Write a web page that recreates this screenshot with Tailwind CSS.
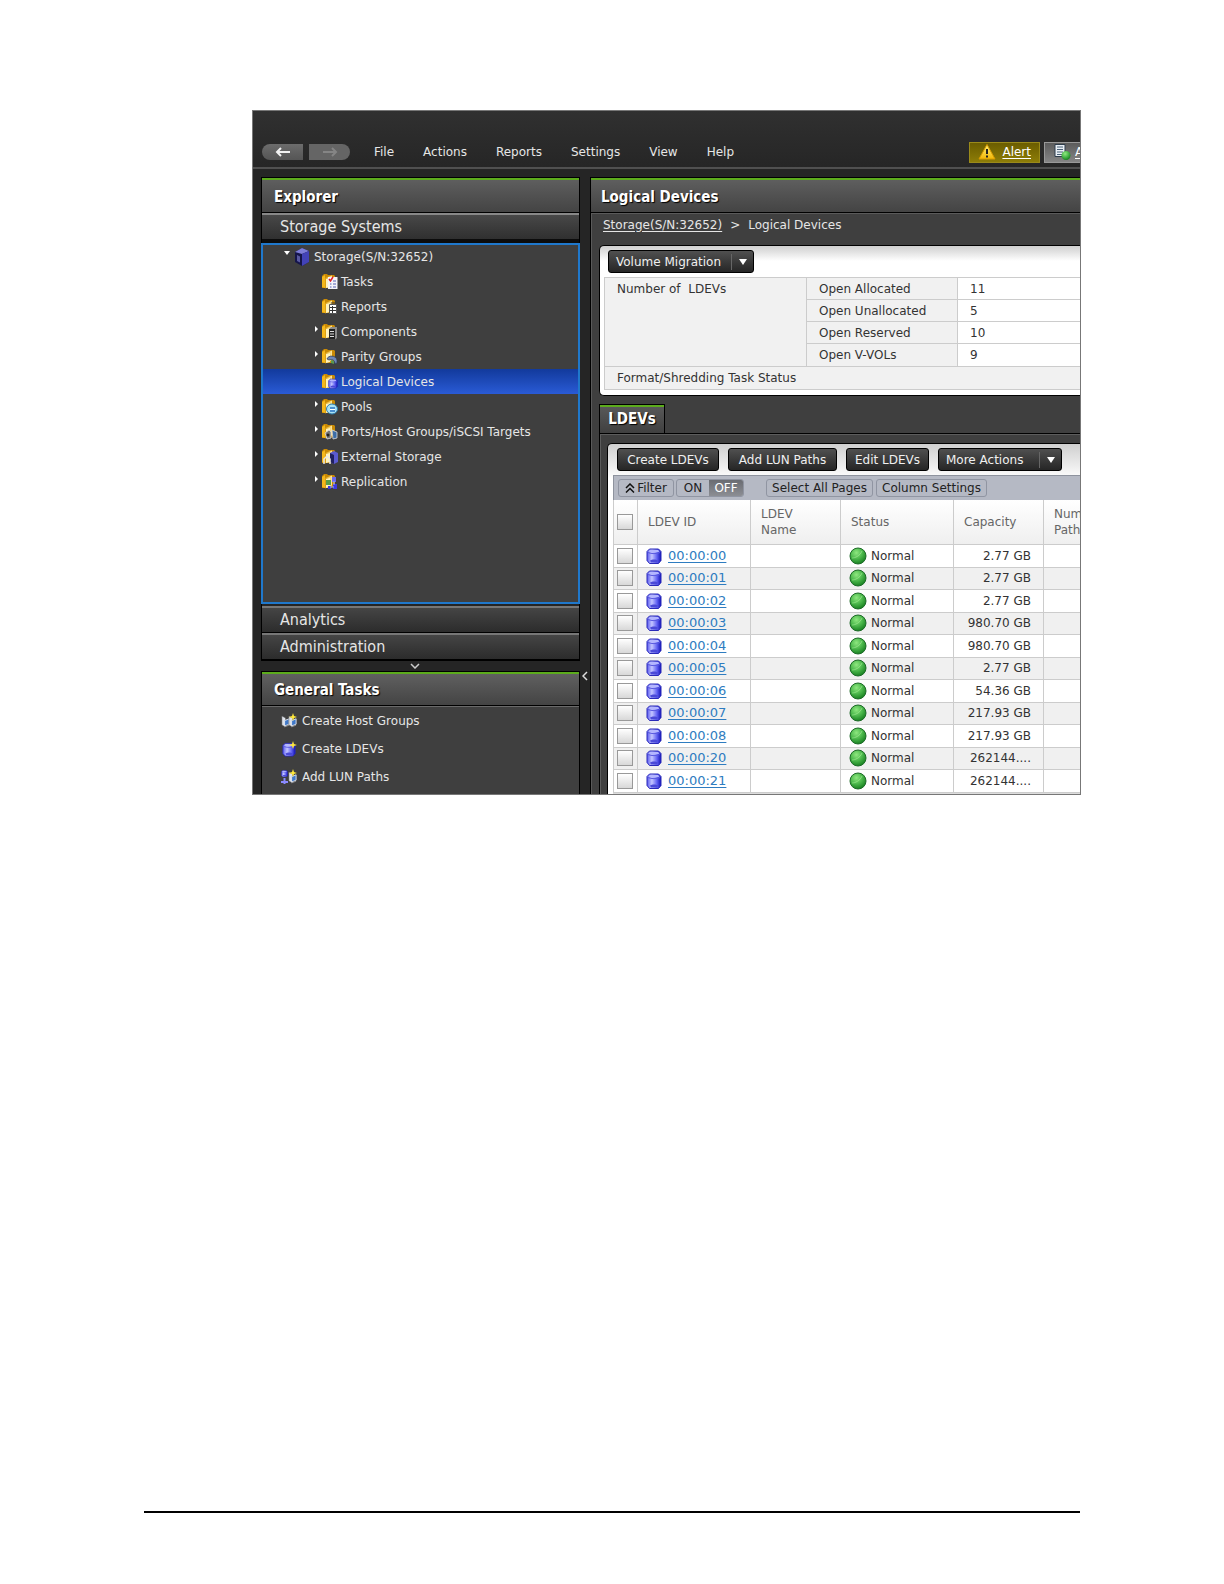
<!DOCTYPE html>
<html lang="en">
<head>
  <meta charset="UTF-8" />
  <meta name="viewport" content="width=device-width, initial-scale=1.0" />
  <title>Logical Devices</title>
  <script src="https://cdn.jsdelivr.net/npm/@tailwindcss/browser@4"></script>
</head>
<body class="bg-white font-['DejaVu_Sans',sans-serif] text-xs">

  <!-- shared icons -->
  <svg class="absolute size-0" aria-hidden="true">
    <defs>
      <linearGradient id="gFolder" x1="0" x2="1"><stop offset="0" stop-color="#d99a08" /><stop offset="1" stop-color="#ffe9a0" /></linearGradient>
      <linearGradient id="gBlue" x1="0" x2="1"><stop offset="0" stop-color="#5a5af0" /><stop offset=".35" stop-color="#c4c6ff" /><stop offset=".7" stop-color="#6464f4" /><stop offset="1" stop-color="#1212b8" /></linearGradient>
      <radialGradient id="gGreen" cx=".4" cy=".3" r=".75"><stop offset="0" stop-color="#8fe880" /><stop offset=".5" stop-color="#4cb84c" /><stop offset="1" stop-color="#127a1c" /></radialGradient>
      <linearGradient id="gWarn" x1="0" x2="0" y1="0" y2="1"><stop offset="0" stop-color="#fff27a" /><stop offset="1" stop-color="#f2b705" /></linearGradient>
    </defs>
    <symbol id="folder" viewBox="0 0 17 17">
      <path d="M1 3l2-2h3l1 1h6l1 1v9l-4 3H1z" fill="#c98a05" />
      <path d="M1 4l3-2v13l-3-1z" fill="#f5b81c" />
      <path d="M4 5l7-2.500v10L4 15.500z" fill="url(#gFolder)" />
      <path d="M5 6l4-1v9l-4 1z" fill="#fff3bd" />
    </symbol>
    <symbol id="disk" viewBox="0 0 16 16">
      <path d="M1 3.500L3.500 1h9L15 3.500v9L12.500 15.500h-9L1 12.500z" fill="url(#gBlue)" stroke="#2a2ab8" />
      <path d="M4 2h8l1.500 1.500c-3 1.500-8 1.500-11 0z" fill="#b4b6ff" />
      <path d="M2 4.500c3 1.500 9 1.500 12 0" fill="none" stroke="#5a5ae0" />
      <path d="M4 12.500c2-1.500 6-1.500 8 0l-1 2H5z" fill="#4a4ad8" />
    </symbol>
    <symbol id="ball" viewBox="0 0 18 18">
      <circle cx="9" cy="9" r="8" fill="url(#gGreen)" stroke="#1d6b28" />
      <path d="M3 11C6 11 11 9 13 4" fill="none" stroke="#b4f5a4" stroke-opacity=".5" />
    </symbol>
    <symbol id="star" viewBox="0 0 8 8">
      <path d="M4 0l1 3 3 1-3 1-1 3-1-3-3-1 3-1z" fill="#ffe83a" />
    </symbol>
    <symbol id="host" viewBox="0 0 10 14">
      <path d="M1 1l4 2v10l-4-2z" fill="#dfe3ea" stroke="#555" stroke-width=".5" />
      <path d="M4 6l5-2v6l-5 2z" fill="#3f78c8" stroke="#e4e8f0" />
      <path d="M4 13l5-2" stroke="#999" />
    </symbol>
  </svg>

  <div class="flex min-h-screen flex-col px-36 pt-[110px] pb-[71px]">
    <div class="-mr-px ml-[108px] overflow-hidden border border-[#777] bg-[#252525] text-[#e6e6e6]">

      <header class="flex h-14 items-center overflow-hidden bg-linear-to-b from-[#303030] to-[#262626] pt-[26px] pl-[9px] whitespace-nowrap">
        <button class="flex h-4 w-[41px] items-center justify-center rounded-l-full bg-linear-to-b from-[#6c6c6c] to-[#555]" aria-label="Back">
          <svg class="h-3 w-4" viewBox="0 0 16 12" fill="none" stroke="#f2f2f2" stroke-width="2"><path d="M15 6H2M6 2L2 6l4 4" /></svg>
        </button>
        <button class="ml-1.5 flex h-4 w-[41px] items-center justify-center rounded-r-full bg-[#656565]" aria-label="Forward">
          <svg class="h-3 w-4" viewBox="0 0 16 12" fill="none" stroke="#858585" stroke-width="2"><path d="M1 6h13M10 2l4 4-4 4" /></svg>
        </button>
        <nav class="ml-6 flex gap-[29px]">
          <a href="#">File</a>
          <a href="#">Actions</a>
          <a href="#">Reports</a>
          <a href="#">Settings</a>
          <a href="#">View</a>
          <a href="#">Help</a>
        </nav>
        <div class="ml-auto flex gap-1">
          <button class="flex h-[21px] w-[71px] items-center justify-between border border-[#9a8a1a] bg-linear-to-b from-[#6b5d00] to-[#8d7d08] pr-2 pl-2 text-white">
            <svg class="size-[18px]" viewBox="0 0 18 18"><path d="M9 1.500L17 16H1z" fill="url(#gWarn)" stroke="#d89a00" stroke-linejoin="round" /><path d="M9 6v5M9 12.500v2" stroke="#222" stroke-width="2" /></svg>
            <span class="underline underline-offset-2">Alert</span>
          </button>
          <button class="flex h-[21px] w-9 items-center gap-1 overflow-hidden border border-r-0 border-[#999] bg-linear-to-b from-[#5c5c5c] to-[#858585] pl-2 text-white" aria-label="Alert list">
            <svg class="size-[18px] shrink-0" viewBox="0 0 18 18"><path d="M2 1.500h10v12H2z" fill="#e8eef4" stroke="#2e3d4c" /><path d="M4 4h6M4 6.500h6M4 9h6M4 11.500h6" stroke="#4b6278" /><circle cx="13" cy="12.500" r="4.500" fill="url(#gGreen)" /></svg>
            <span class="underline underline-offset-2">A</span>
          </button>
        </div>
      </header>

      <div class="flex border-t-2 border-[#505050] pt-2 pl-2">

        <!-- left side -->
        <aside class="flex w-[319px] shrink-0 flex-col">
          <section class="border border-black">
            <h2 class="flex h-[35px] items-center border-t-2 border-b border-t-[#5cab1c] border-b-black bg-linear-to-b from-[#5e5e5e] to-[#444] pt-[3px] pl-3 font-['DejaVu_Sans_Condensed','DejaVu_Sans',sans-serif] text-[15px] font-bold text-white [text-shadow:1px_1px_1px_#000]">Explorer</h2>
            <button class="flex h-[30px] w-full items-center border-t-2 border-b-4 border-t-[#888] border-b-[#0c0c0c] bg-linear-to-b from-[#484848] to-[#303030] pl-[18px] font-['DejaVu_Sans_Condensed','DejaVu_Sans',sans-serif] text-base">Storage Systems</button>

            <div class="-mx-px h-[361px] border-2 border-[#1f78cc] bg-[#3f3f3f]">
              <a href="#" class="flex h-6 items-center pl-[21px]">
                <svg class="mb-2 h-1 w-1.5" viewBox="0 0 6 4"><path d="M0 0h6L3 4z" fill="#fff" /></svg>
                <svg class="mx-1 h-[18px] w-4" viewBox="0 0 16 18"><path d="M1 4l7-4 7 3v11l-7 4-7-4z" fill="#15154a" /><path d="M1 4l7-4 7 3-7 3z" fill="#7d7dd8" /><path d="M8 6l7-3v11l-7 4z" fill="#4343b8" /><path d="M3 7l3 1.500v6L3 13z" fill="#5858a0" /></svg>
                <span>Storage(S/N:32652)</span>
              </a>
              <ul>
                <li><a href="#" class="flex h-[25px] items-center pl-[58px]">
                  <svg class="mr-[3px] size-[17px]" viewBox="0 0 17 17"><use href="#folder" /><path d="M7 4h9.500v12H7z" fill="#f4f4fa" /><path d="M8 6l1.500 2L12 4" stroke="#e0202a" stroke-width="1.500" fill="none" /><path d="M12 8h3M9 11h1.500M12 11h3M9 14h1.500M12 14h3" stroke="#5560b0" /></svg>
                  Tasks</a></li>
                <li><a href="#" class="flex h-[25px] items-center pl-[58px]">
                  <svg class="mr-[3px] size-[17px]" viewBox="0 0 17 17"><use href="#folder" /><path d="M8.500 6.500h7v9h-7z" fill="#fff" stroke="#555" /><path d="M10 5h4M9 9.500h6M9 12.500h6M11.500 8v7" stroke="#333" /></svg>
                  Reports</a></li>
                <li><a href="#" class="flex h-[25px] items-center pl-[52px]">
                  <svg class="mr-[3px] mb-1.5 h-1.5 w-[3px]" viewBox="0 0 3 6"><path d="M0 0v6l3-3z" fill="#fff" /></svg>
                  <svg class="mr-[3px] size-[17px]" viewBox="0 0 17 17"><use href="#folder" /><path d="M8 6l2-2h6v11l-2 1.500H8z" fill="#8b8b8b" /><path d="M8 6h6v10.500H8z" fill="#222" /><path d="M9 8.500h4M9 11h4M9 13.500h4" stroke="#ddd" /></svg>
                  Components</a></li>
                <li><a href="#" class="flex h-[25px] items-center pl-[52px]">
                  <svg class="mr-[3px] mb-1.5 h-1.5 w-[3px]" viewBox="0 0 3 6"><path d="M0 0v6l3-3z" fill="#fff" /></svg>
                  <svg class="mr-[3px] size-[17px]" viewBox="0 0 17 17"><use href="#folder" /><path d="M6 11c1-4 9-4 10 1v3l-2 1c0-4-3-5-6-4z" fill="#6f88b8" stroke="#29364e" stroke-width=".7" /><path d="M10 12l3 1v3l-3-1z" fill="#5a9850" /></svg>
                  Parity Groups</a></li>
                <li><a href="#" class="flex h-[25px] items-center bg-linear-to-b from-[#123a9c] to-[#2a5bd6] pl-[58px]">
                  <svg class="mr-[3px] size-[17px]" viewBox="0 0 17 17"><use href="#folder" /><use href="#disk" x="7" y="5" width="10" height="11" /></svg>
                  Logical Devices</a></li>
                <li><a href="#" class="flex h-[25px] items-center pl-[52px]">
                  <svg class="mr-[3px] mb-1.5 h-1.5 w-[3px]" viewBox="0 0 3 6"><path d="M0 0v6l3-3z" fill="#fff" /></svg>
                  <svg class="mr-[3px] size-[17px]" viewBox="0 0 17 17"><use href="#folder" /><ellipse cx="11" cy="11" rx="5.500" ry="5" fill="#a9e2f5" stroke="#2c7cae" /><path d="M9 9h5v5H9z" fill="#4a8fd0" /><path d="M9 11.500h5" stroke="#fff" /></svg>
                  Pools</a></li>
                <li><a href="#" class="flex h-[25px] items-center pl-[52px]">
                  <svg class="mr-[3px] mb-1.5 h-1.5 w-[3px]" viewBox="0 0 3 6"><path d="M0 0v6l3-3z" fill="#fff" /></svg>
                  <svg class="mr-[3px] size-[17px]" viewBox="0 0 17 17"><use href="#folder" /><path d="M4 10l4-3 2 2v6l-4 1z" fill="#777" stroke="#ddd" stroke-width=".8" /><path d="M11 7l5 2v6l-4 1z" fill="#3c6ea8" stroke="#ddd" stroke-width=".8" /><circle cx="7" cy="12" r="1.500" fill="#222" /></svg>
                  Ports/Host Groups/iSCSI Targets</a></li>
                <li><a href="#" class="flex h-[25px] items-center pl-[52px]">
                  <svg class="mr-[3px] mb-1.5 h-1.5 w-[3px]" viewBox="0 0 3 6"><path d="M0 0v6l3-3z" fill="#fff" /></svg>
                  <svg class="mr-[3px] size-[17px]" viewBox="0 0 17 17"><use href="#folder" /><path d="M9 5l4-2 4 2v9l-4 2-4-2z" fill="#5a5ad0" /><path d="M9 5l4 2v9l-4-2z" fill="#202060" /><path d="M3 16v-5l3-3 3 3v5" fill="none" stroke="#e8e8e8" stroke-width="1.500" /></svg>
                  External Storage</a></li>
                <li><a href="#" class="flex h-[25px] items-center pl-[52px]">
                  <svg class="mr-[3px] mb-1.5 h-1.5 w-[3px]" viewBox="0 0 3 6"><path d="M0 0v6l3-3z" fill="#fff" /></svg>
                  <svg class="mr-[3px] size-[17px]" viewBox="0 0 17 17"><use href="#folder" /><path d="M5 7h5v5H5z" fill="#5aa04a" /><path d="M11 4h4v5h-4z" fill="#6a6af0" /><path d="M12 11h4v5h-4zM7 13h3v3H7z" fill="#3a3ae0" /><path d="M9 14h4M13 8v4" stroke="#9ab4ff" /></svg>
                  Replication</a></li>
              </ul>
            </div>

            <button class="mt-0.5 flex h-[27px] w-full items-center border-t-2 border-b border-t-[#777] border-b-black bg-linear-to-b from-[#454545] to-[#2c2c2c] pl-[18px] font-['DejaVu_Sans_Condensed','DejaVu_Sans',sans-serif] text-base leading-5">Analytics</button>
            <button class="flex h-[27px] w-full items-center border-t-2 border-b border-t-[#777] border-b-black bg-linear-to-b from-[#454545] to-[#2c2c2c] pl-[18px] font-['DejaVu_Sans_Condensed','DejaVu_Sans',sans-serif] text-base leading-5">Administration</button>
          </section>

          <button class="flex h-2.5 items-center justify-center pr-3" aria-label="Collapse navigation">
            <svg class="h-1.5 w-2.5" viewBox="0 0 10 6" fill="none" stroke="#ccc" stroke-width="1.500"><path d="M1 1l4 4 4-4" /></svg>
          </button>

          <section class="grow border border-b-0 border-black bg-[#3f3f3f]">
            <h2 class="flex h-[34px] items-center border-t-2 border-b border-t-[#5cab1c] border-b-black bg-linear-to-b from-[#606060] to-[#444] pt-[3px] pl-3 font-['DejaVu_Sans_Condensed','DejaVu_Sans',sans-serif] text-[15px] font-bold text-white [text-shadow:1px_1px_1px_#000]">General Tasks</h2>
            <ul class="border-t border-[#6a6a6a]">
              <li><a href="#" class="flex h-7 items-center gap-[5px] pl-[19px]">
                <svg class="size-4" viewBox="0 0 16 16"><use href="#host" x="0" y="2" width="9" height="13" /><use href="#host" x="7" y="2" width="9" height="13" /><use href="#star" x="8" y="0" width="8" height="8" /></svg>
                Create Host Groups</a></li>
              <li><a href="#" class="flex h-7 items-center gap-[5px] pl-[19px]">
                <svg class="size-4" viewBox="0 0 16 16"><use href="#disk" x="1" y="1" width="14" height="15" /><use href="#star" x="8" y="0" width="8" height="8" /></svg>
                Create LDEVs</a></li>
              <li><a href="#" class="flex h-7 items-center gap-[5px] pl-[19px]">
                <svg class="size-4" viewBox="0 0 16 16"><use href="#disk" x="0" y="0" width="7" height="9" /><path d="M3.500 9v6M0 13h7" stroke="#8a8aff" stroke-width="2" /><use href="#host" x="7" y="2" width="9" height="13" /><use href="#star" x="8" y="0" width="8" height="8" /></svg>
                Add LUN Paths</a></li>
            </ul>
          </section>
        </aside>

        <div class="flex w-2.5 shrink-0 items-start justify-center pt-[494px]">
          <button aria-label="Hide side panel">
            <svg class="h-2.5 w-1.5" viewBox="0 0 6 10" fill="none" stroke="#ddd" stroke-width="1.500"><path d="M5 1L1 5l4 4" /></svg>
          </button>
        </div>

        <!-- right side, runs past the window edge -->
        <main class="min-w-0 grow overflow-hidden border-t border-l border-black bg-[#3f3f3f] whitespace-nowrap">
          <h1 class="flex h-[35px] items-center border-t-2 border-b border-t-[#5cab1c] border-b-black bg-linear-to-b from-[#5e5e5e] to-[#444] pt-[3px] pl-2.5 font-['DejaVu_Sans_Condensed','DejaVu_Sans',sans-serif] text-[15px] font-bold text-white [text-shadow:1px_1px_1px_#000]">Logical Devices</h1>

          <div class="border-t border-l border-[#5a5a5a] pl-[7px]">
            <p class="flex h-[21px] items-center gap-2 pl-1">
              <a href="#" class="underline underline-offset-2">Storage(S/N:32652)</a>
              <span>&gt;</span>
              <span>Logical Devices</span>
            </p>

            <section class="mt-2.5 rounded-l-[5px] border border-r-0 border-black bg-white bg-linear-to-b from-[#cfcfcf] to-white to-10% pt-1 pb-[5px] pl-1 text-[#333]">
              <button class="ml-1 flex h-[23px] w-[146px] items-center justify-between rounded-[3px] border border-black bg-linear-to-b from-[#505050] to-[#262626] pl-[7px] text-[#f0f0f0]">
                Volume Migration
                <span class="flex h-4 w-[22px] items-center justify-center border-l border-[#666]">
                  <svg class="h-1.5 w-2" viewBox="0 0 8 6"><path d="M0 0h8L4 6z" fill="#fff" /></svg>
                </span>
              </button>
              <table class="mt-1 w-full table-fixed border-collapse border border-r-0 border-[#ccc] bg-[#f1f1f1] text-left">
                <colgroup><col class="w-[202px]" /><col class="w-[151px]" /><col /></colgroup>
                <tbody>
                  <tr class="h-[22px]">
                    <th rowspan="4" class="border-r border-[#ccc] pt-[3px] pl-3 align-top font-normal whitespace-pre">Number of  LDEVs</th>
                    <th class="border-r border-[#ccc] pl-3 font-normal">Open Allocated</th>
                    <td class="bg-white pl-3">11</td>
                  </tr>
                  <tr class="h-[22px] border-t border-[#ccc]">
                    <th class="border-r border-[#ccc] pl-3 font-normal">Open Unallocated</th>
                    <td class="bg-white pl-3">5</td>
                  </tr>
                  <tr class="h-[22px] border-t border-[#ccc]">
                    <th class="border-r border-[#ccc] pl-3 font-normal">Open Reserved</th>
                    <td class="bg-white pl-3">10</td>
                  </tr>
                  <tr class="h-[23px] border-t border-[#ccc]">
                    <th class="border-r border-[#ccc] pl-3 font-normal">Open V-VOLs</th>
                    <td class="bg-white pl-3">9</td>
                  </tr>
                  <tr class="h-[23px] border-t border-[#ccc]">
                    <th colspan="3" class="pl-3 font-normal">Format/Shredding Task Status</th>
                  </tr>
                </tbody>
              </table>
            </section>

            <button class="mt-2 block h-[29px] w-[66px] border border-b-0 border-black bg-linear-to-b from-[#5a5a5a] to-[#404040] font-['DejaVu_Sans_Condensed','DejaVu_Sans',sans-serif] text-[15px] font-bold text-white [text-shadow:1px_1px_1px_#000]">
              <span class="flex h-full w-full items-center justify-center border-t-2 border-[#5cab1c]">LDEVs</span>
            </button>
            <div class="border-t border-l border-black">
              <div class="border-t border-l border-[#5c5c5c] pt-2 pl-1.5">
                <section class="rounded-tl-[5px] border-t border-l border-black bg-white bg-linear-to-b from-[#cfcfcf] to-white to-10% pt-1 pl-[5px] text-[#333]">
                  <div class="flex gap-[9px] pl-1 text-[#f0f0f0]">
                    <button class="h-[23px] w-[102px] shrink-0 rounded-[3px] border border-black bg-linear-to-b from-[#505050] to-[#262626]">Create LDEVs</button>
                    <button class="h-[23px] w-[109px] shrink-0 rounded-[3px] border border-black bg-linear-to-b from-[#505050] to-[#262626]">Add LUN Paths</button>
                    <button class="h-[23px] w-[83px] shrink-0 rounded-[3px] border border-black bg-linear-to-b from-[#505050] to-[#262626]">Edit LDEVs</button>
                    <button class="flex h-[23px] w-[124px] shrink-0 items-center justify-between rounded-[3px] border border-black bg-linear-to-b from-[#505050] to-[#262626] pl-[7px]">
                      More Actions
                      <span class="flex h-4 w-[22px] items-center justify-center border-l border-[#666]">
                        <svg class="h-1.5 w-2" viewBox="0 0 8 6"><path d="M0 0h8L4 6z" fill="#fff" /></svg>
                      </span>
                    </button>
                  </div>

                  <div class="mt-1 flex h-[25px] items-center border-t border-l border-[#8e939e] bg-[#b5b9c4] pl-1 text-[#222]">
                    <button class="flex h-[18px] w-14 items-center justify-center gap-0.5 rounded-[3px] border border-[#9095a2]">
                      <svg class="h-2.5 w-2.5" viewBox="0 0 10 10" fill="none" stroke="#111" stroke-width="1.500"><path d="M1 5l4-4 4 4M1 9.500l4-4 4 4" /></svg>
                      Filter
                    </button>
                    <div class="ml-0.5 flex h-[18px] w-[68px] rounded-[3px] border border-[#9095a2]">
                      <button class="w-8">ON</button>
                      <button class="grow rounded-r-[2px] bg-linear-to-b from-[#6a6c72] to-[#8c8e94] text-white">OFF</button>
                    </div>
                    <button class="ml-[22px] h-[18px] w-[107px] rounded-[3px] border border-[#9095a2]">Select All Pages</button>
                    <button class="ml-[3px] h-[18px] w-[111px] rounded-[3px] border border-[#9095a2]">Column Settings</button>
                  </div>

                  <table class="w-[520px] table-fixed border-l border-[#ccc] text-left">
                    <colgroup>
                      <col class="w-6" /><col class="w-[113px]" /><col class="w-[90px]" /><col class="w-[113px]" /><col class="w-[90px]" /><col />
                    </colgroup>
                    <thead>
                      <tr class="h-[44px] bg-linear-to-b from-white to-[#efefef] text-[#666]">
                        <th class="border-r border-[#ccc] pl-[3px]"><input type="checkbox" aria-label="Select all" class="block size-4 appearance-none border border-[#999] bg-linear-to-b from-white to-[#d8d8d8]" /></th>
                        <th class="border-r border-[#ccc] pl-2.5 font-normal">LDEV ID</th>
                        <th class="border-r border-[#ccc] pl-2.5 font-normal">LDEV<br />Name</th>
                        <th class="border-r border-[#ccc] pl-2.5 font-normal">Status</th>
                        <th class="border-r border-[#ccc] pl-2.5 font-normal">Capacity</th>
                        <th class="pl-2.5 font-normal">Number of<br />Paths</th>
                      </tr>
                    </thead>
                    <tbody id="ldevs"></tbody>
                  </table>
                  <div class="h-0.5 border-t border-[#ccc] bg-[#ddd]"></div>
                </section>
              </div>
            </div>
          </div>
        </main>
      </div>
    </div>

    <hr class="mt-auto border-t-2 border-black" />
  </div>

  <script>
    const ldevs = [
      ['00:00:00', '2.77 GB'],
      ['00:00:01', '2.77 GB'],
      ['00:00:02', '2.77 GB'],
      ['00:00:03', '980.70 GB'],
      ['00:00:04', '980.70 GB'],
      ['00:00:05', '2.77 GB'],
      ['00:00:06', '54.36 GB'],
      ['00:00:07', '217.93 GB'],
      ['00:00:08', '217.93 GB'],
      ['00:00:20', '262144....'],
      ['00:00:21', '262144....'],
    ];

    document.getElementById('ldevs').innerHTML = ldevs.map(([id, capacity]) => `
      <tr class="h-[23px] border-t border-[#ccc] bg-white even:h-[22px] even:bg-[#f0f0f0]">
        <td class="border-r border-[#ccc] pl-[3px]"><input type="checkbox" aria-label="Select ${id}" class="block size-4 appearance-none border border-[#999] bg-linear-to-b from-white to-[#d8d8d8]" /></td>
        <td class="border-r border-[#ccc] pl-2">
          <div class="flex items-center gap-1.5">
            <svg class="size-4" viewBox="0 0 16 16"><use href="#disk" /></svg>
            <a href="#" class="text-[13px] leading-4 text-[#2e7cc0] underline underline-offset-2">${id}</a>
          </div>
        </td>
        <td class="border-r border-[#ccc]"></td>
        <td class="border-r border-[#ccc] pl-2">
          <div class="flex items-center gap-1">
            <svg class="size-[18px]" viewBox="0 0 18 18"><use href="#ball" /></svg>
            Normal
          </div>
        </td>
        <td class="border-r border-[#ccc] pr-3 text-right">${capacity}</td>
        <td></td>
      </tr>`).join('');
  </script>
</body>
</html>
